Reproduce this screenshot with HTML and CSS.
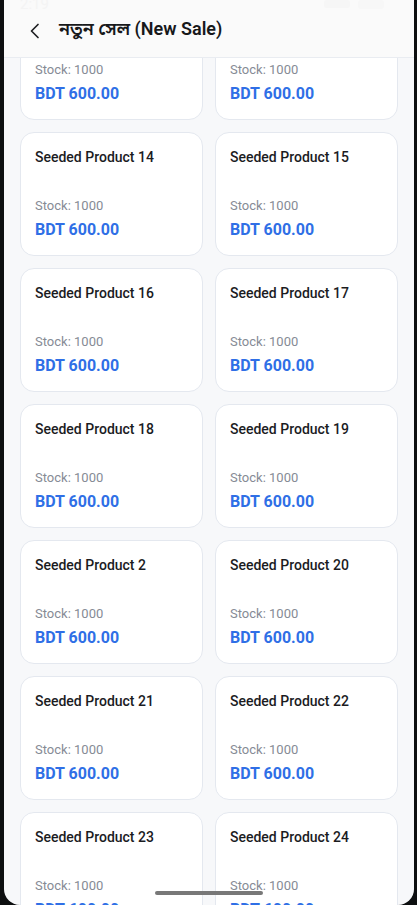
FILE: index.html
```html
<!DOCTYPE html>
<html lang="bn">
<head>
<meta charset="utf-8">
<title>New Sale</title>
<link rel="stylesheet" href="styles.css">
</head>
<body>
<div class="screen">
  <div class="status">
    <span class="time">2:19</span>
    <span class="status-icons"><span class="sig"></span><span class="batt"></span></span>
  </div>
  <header class="appbar">
    <span class="back">
      <svg width="12" height="16" viewBox="0 0 12 16"><path d="M9 1.5 L2.5 8 L9 14.5" fill="none" stroke="#1f2023" stroke-width="1.7" stroke-linecap="round" stroke-linejoin="round"/></svg>
    </span>
    <h1 class="title">নতুন সেল (New Sale)</h1>
  </header>
  <main class="list">
    <div class="grid">
      <div class="card"><div class="name">Seeded Product 12</div><div class="stock">Stock: 1000</div><div class="price">BDT 600.00</div></div>
      <div class="card"><div class="name">Seeded Product 13</div><div class="stock">Stock: 1000</div><div class="price">BDT 600.00</div></div>
      <div class="card"><div class="name">Seeded Product 14</div><div class="stock">Stock: 1000</div><div class="price">BDT 600.00</div></div>
      <div class="card"><div class="name">Seeded Product 15</div><div class="stock">Stock: 1000</div><div class="price">BDT 600.00</div></div>
      <div class="card"><div class="name">Seeded Product 16</div><div class="stock">Stock: 1000</div><div class="price">BDT 600.00</div></div>
      <div class="card"><div class="name">Seeded Product 17</div><div class="stock">Stock: 1000</div><div class="price">BDT 600.00</div></div>
      <div class="card"><div class="name">Seeded Product 18</div><div class="stock">Stock: 1000</div><div class="price">BDT 600.00</div></div>
      <div class="card"><div class="name">Seeded Product 19</div><div class="stock">Stock: 1000</div><div class="price">BDT 600.00</div></div>
      <div class="card"><div class="name">Seeded Product 2</div><div class="stock">Stock: 1000</div><div class="price">BDT 600.00</div></div>
      <div class="card"><div class="name">Seeded Product 20</div><div class="stock">Stock: 1000</div><div class="price">BDT 600.00</div></div>
      <div class="card"><div class="name">Seeded Product 21</div><div class="stock">Stock: 1000</div><div class="price">BDT 600.00</div></div>
      <div class="card"><div class="name">Seeded Product 22</div><div class="stock">Stock: 1000</div><div class="price">BDT 600.00</div></div>
      <div class="card"><div class="name">Seeded Product 23</div><div class="stock">Stock: 1000</div><div class="price">BDT 600.00</div></div>
      <div class="card"><div class="name">Seeded Product 24</div><div class="stock">Stock: 1000</div><div class="price">BDT 600.00</div></div>
    </div>
  </main>
  <div class="home-bar"></div>
</div>
</body>
</html>
```
FILE: styles.css
```css
* { box-sizing: border-box; }
html, body {
  margin: 0;
  padding: 0;
  height: 100%;
  background: #0d0f10;
  overflow: hidden;
}
body {
  font-family: Roboto, "Noto Sans", "Noto Sans Bengali", "Liberation Sans", sans-serif;
  padding: 0 3px 0 4px;
}
.screen {
  position: relative;
  height: 905px;
  background: #f7f8fa;
  border-radius: 0 0 16px 16px;
  overflow: hidden;
  display: flex;
  flex-direction: column;
}
.status {
  position: absolute;
  top: -4px;
  left: 16px;
  right: 30px;
  display: flex;
  justify-content: space-between;
  align-items: center;
  z-index: 3;
  height: 16px;
}
.time {
  color: #f4f4f4;
  font-size: 15px;
  line-height: 16px;
}
.status-icons { display: flex; gap: 8px; align-items: center; }
.sig { width: 26px; height: 8px; background: #f6f6f6; border-radius: 2px; }
.batt { width: 26px; height: 9px; background: #f7f7f7; border-radius: 3px; }
.appbar {
  position: relative;
  z-index: 2;
  flex: none;
  height: 58px;
  background: #fafafa;
  border-bottom: 1px solid #e9ecf1;
  display: flex;
  align-items: center;
  padding: 2px 0 0 25px;
  gap: 18px;
}
.back { display: flex; width: 12px; height: 16px; margin-top: 2px; }
.title {
  margin: 0;
  font-size: 18px;
  font-weight: 600;
  color: #17181a;
  letter-spacing: 0;
}
.list {
  flex: 1;
  overflow: hidden;
}
.grid {
  margin-top: -62px;
  padding: 0 16px;
  display: grid;
  grid-template-columns: 1fr 1fr;
  gap: 12px;
}
.card {
  background: #ffffff;
  border: 1px solid #e4e8ef;
  border-radius: 14px;
  padding: 14px 14px 15px;
  height: 124px;
  display: flex;
  flex-direction: column;
}
.name {
  font-size: 14px;
  font-weight: 500;
  color: #1b1c1f;
  line-height: 20px;
  min-height: 40px;
}
.stock {
  margin-top: 10px;
  font-size: 13px;
  color: #868b95;
  line-height: 18px;
}
.price {
  margin-top: 4px;
  font-size: 16px;
  font-weight: 700;
  color: #2f6fe6;
  line-height: 22px;
}
.home-bar {
  position: absolute;
  left: 151px;
  bottom: 10px;
  width: 108px;
  height: 4px;
  border-radius: 2px;
  background: #787878;
}
```
